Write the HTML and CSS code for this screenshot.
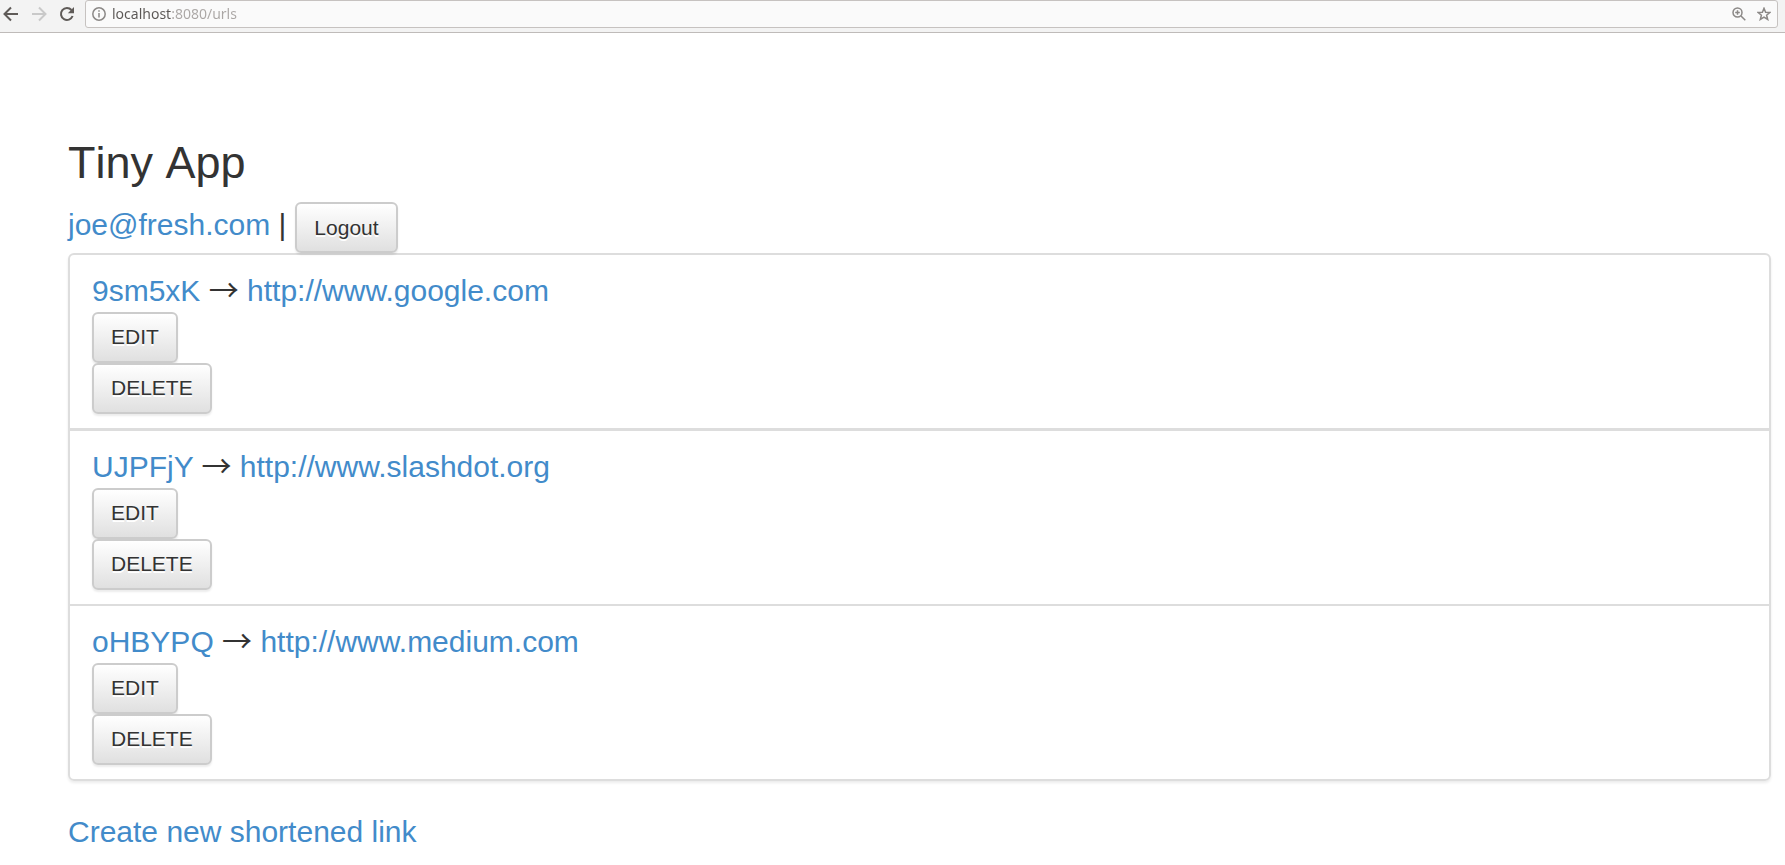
FILE: index.html
```
<!DOCTYPE html>
<html lang="en">
<head>
<meta charset="utf-8">
<title>Tiny App</title>
<link rel="stylesheet" href="styles.css">
</head>
<body>
<header class="toolbar">
  <button class="tool" type="button" aria-label="Back">
    <svg class="icon" viewBox="0 0 16 16"><path d="M15 8H2M8 1.5L1.5 8L8 14.5"/></svg>
  </button>
  <button class="tool tool-off" type="button" aria-label="Forward" disabled>
    <svg class="icon" viewBox="0 0 16 16"><path d="M1 8H14M8 1.5L14.500 8L8 14.500"/></svg>
  </button>
  <button class="tool" type="button" aria-label="Reload">
    <svg class="icon" viewBox="0 0 16 16"><path d="M13.600 10A6 6 0 1 1 12.500 4"/><path class="solid" d="M15 1V7.200H8.800Z"/></svg>
  </button>
  <div class="address">
    <svg class="small-icon" viewBox="0 0 14 14"><circle cx="7" cy="7" r="6.200"/><path d="M7 6V10.500M7 3.300V4.800"/></svg>
    <input class="url" type="text" aria-label="Address" value="localhost:8080/urls">
    <button class="tool" type="button" aria-label="Zoom">
      <svg class="small-icon" viewBox="0 0 14 14"><circle cx="5.500" cy="5.500" r="4.500"/><path d="M9 9L13.300 13.300M3.200 5.500H7.800M5.500 3.200V7.800"/></svg>
    </button>
    <button class="tool" type="button" aria-label="Bookmark">
      <svg class="small-icon" viewBox="0 0 14 14"><path d="M7 1.300L8.600 5.200L12.900 5.500L9.600 8.200L10.700 12.500L7 10.200L3.300 12.500L4.400 8.200L1.100 5.500L5.400 5.200Z"/></svg>
    </button>
  </div>
</header>
<main class="page">
  <h1 class="title">Tiny App</h1>
  <div class="account">
    <span><a href="#">joe@fresh.com</a> |</span>
    <button class="btn" type="button">Logout</button>
  </div>
  <ul class="links">
    <li class="item">
      <div><a href="#">9sm5xK</a> <span class="arrow">→</span> <a href="#">http://www.google.com</a></div>
      <button class="btn" type="button">EDIT</button>
      <button class="btn" type="button">DELETE</button>
    </li>
    <li class="item">
      <div><a href="#">UJPFjY</a> <span class="arrow">→</span> <a href="#">http://www.slashdot.org</a></div>
      <button class="btn" type="button">EDIT</button>
      <button class="btn" type="button">DELETE</button>
    </li>
    <li class="item">
      <div><a href="#">oHBYPQ</a> <span class="arrow">→</span> <a href="#">http://www.medium.com</a></div>
      <button class="btn" type="button">EDIT</button>
      <button class="btn" type="button">DELETE</button>
    </li>
  </ul>
  <a class="create" href="#">Create new shortened link</a>
</main>
</body>
</html>
```
FILE: styles.css
```
* {
  box-sizing: border-box;
}

body {
  margin: 0;
  background: #fff;
  color: #333;
  font: 30px/42px "Liberation Sans", Arial, sans-serif;
}

a {
  color: #428bca;
  text-decoration: none;
}

.toolbar {
  display: flex;
  align-items: center;
  gap: 12px;
  padding: 0 7px 4px 3px;
  border-bottom: 1px solid #bfbbb9;
  background: #f3f3f3;
}

.tool {
  display: flex;
  padding: 0;
  border: 0;
  background: none;
  color: #5f5b58;
}

.tool-off {
  color: #c9c9c9;
}

.icon,
.small-icon {
  flex: none;
  width: 16px;
  height: 16px;
  fill: none;
  stroke: currentColor;
  stroke-width: 2;
}

.small-icon {
  width: 14px;
  height: 14px;
  color: #8b8886;
  stroke-width: 1.5;
}

.solid {
  fill: currentColor;
  stroke: none;
}

.address {
  display: flex;
  flex: 1;
  align-items: center;
  gap: 11px;
  height: 28px;
  margin-left: -2px;
  padding: 0 6px;
  border: 1px solid #c6c2c0;
  border-radius: 3px;
  background: #fafafa;
}

.url {
  flex: 1;
  min-width: 0;
  margin-left: -5px;
  padding: 0;
  border: 0;
  outline: 0;
  background: linear-gradient(to right, #5a5654 60px, #aaa6a4 60px);
  background-clip: text;
  color: transparent;
  font: 14px/20px "Noto Sans", sans-serif;
}

.page {
  padding: 105px 14px 12px 68px;
}

.title {
  margin: 0 0 14px;
  font-size: 45px;
  font-weight: 400;
  font-kerning: none;
  line-height: 50px;
}

.account {
  display: flex;
  align-items: baseline;
  gap: 9px;
}

.btn {
  padding: 8px 17px;
  border: 2px solid #ccc;
  border-radius: 6px;
  background: linear-gradient(#fff, #e0e0e0);
  box-shadow: 0 2px 2px rgba(0, 0, 0, 0.08);
  color: #333;
  font: 21px/31px "Liberation Sans", Arial, sans-serif;
  text-shadow: 0 2px 0 #fff;
}

.links {
  margin: 0 0 30px;
  padding: 0;
  border: 2px solid #ddd;
  border-radius: 6px;
  box-shadow: 0 2px 3px rgba(0, 0, 0, 0.08);
  list-style: none;
}

.item {
  display: flex;
  flex-direction: column;
  align-items: flex-start;
  padding: 15px 22px 14px;
  border-bottom: 2px solid #ddd;
}

.item:first-child {
  border-bottom-width: 3px;
}

.item:last-child {
  border-bottom: 0;
}

.item .btn {
  padding: 7px 17px 9px;
}

.arrow {
  font-family: "Noto Sans CJK JP", sans-serif;
  line-height: 30px;
}

.create {
  display: inline-block;
}
```
